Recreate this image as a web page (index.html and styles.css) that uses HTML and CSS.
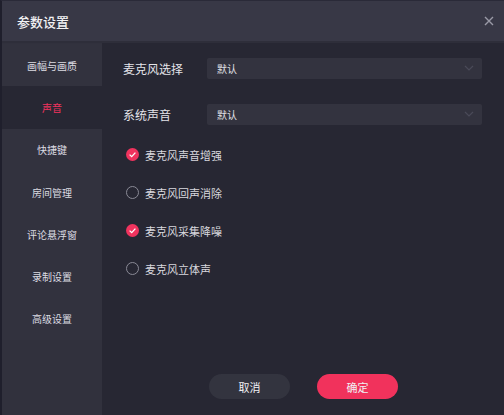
FILE: index.html
```html
<!DOCTYPE html>
<html lang="zh-CN">
<head>
<meta charset="utf-8">
<link rel="stylesheet" href="styles.css">
</head>
<body>
<div class="dialog">
  <div class="header">
    <span class="title">参数设置</span>
    <svg class="close" width="10" height="10" viewBox="0 0 10 10"><path d="M1 1L9 9M9 1L1 9" stroke="#9a9aa6" stroke-width="1.4" fill="none"/></svg>
  </div>
  <div class="body">
    <nav class="side">
      <div class="item">画幅与画质</div>
      <div class="item active">声音</div>
      <div class="item">快捷键</div>
      <div class="item">房间管理</div>
      <div class="item">评论悬浮窗</div>
      <div class="item">录制设置</div>
      <div class="item">高级设置</div>
    </nav>
    <main class="main">
      <div class="field">
        <span class="label">麦克风选择</span>
        <div class="select"><span>默认</span><svg class="chev" width="10" height="6" viewBox="0 0 10 6"><path d="M1 1L5 5L9 1" stroke="#4a4a58" stroke-width="1.2" fill="none"/></svg></div>
      </div>
      <div class="field">
        <span class="label">系统声音</span>
        <div class="select"><span>默认</span><svg class="chev" width="10" height="6" viewBox="0 0 10 6"><path d="M1 1L5 5L9 1" stroke="#4a4a58" stroke-width="1.2" fill="none"/></svg></div>
      </div>
      <div class="checks">
        <div class="check on"><span class="box"><svg width="13" height="13" viewBox="0 0 13 13"><path d="M3.6 6.6L5.7 8.6L9.4 4.6" stroke="#fff" stroke-width="1.3" fill="none"/></svg></span>麦克风声音增强</div>
        <div class="check"><span class="box"></span>麦克风回声消除</div>
        <div class="check on"><span class="box"><svg width="13" height="13" viewBox="0 0 13 13"><path d="M3.6 6.6L5.7 8.6L9.4 4.6" stroke="#fff" stroke-width="1.3" fill="none"/></svg></span>麦克风采集降噪</div>
        <div class="check"><span class="box"></span>麦克风立体声</div>
      </div>
      <div class="actions">
        <button class="btn cancel">取消</button>
        <button class="btn ok">确定</button>
      </div>
    </main>
  </div>
</div>
</body>
</html>
```
FILE: styles.css
```css
* { box-sizing: border-box; }
html, body { margin: 0; padding: 0; }
body {
  width: 504px;
  height: 415px;
  background: #272733;
  font-family: "Noto Sans CJK SC", "Noto Sans", sans-serif;
  overflow: hidden;
}
.dialog {
  width: 504px;
  height: 415px;
  display: flex;
  flex-direction: column;
  border-left: 2px solid #1f1f2c;
  border-top: 1px solid #2a2a38;
}
.header {
  height: 42px;
  flex: none;
  background: #383846;
  display: flex;
  align-items: center;
  justify-content: space-between;
  padding: 0 10px 0 15px;
  border-bottom: 2px solid #2e2e3a;
}
.title {
  color: #f2f2f4;
  font-size: 13px;
  font-weight: 500;
}
.close { display: block; }
.body {
  flex: 1;
  display: flex;
}
.side {
  width: 100px;
  flex: none;
  background: #31313d;
  display: flex;
  flex-direction: column;
  padding-top: 1px;
}
.item {
  height: 42.3px;
  display: flex;
  align-items: center;
  justify-content: center;
  color: #dcdce2;
  font-size: 10px;
  background: #32323e;
}
.item.active {
  background: #272733;
  color: #f0335e;
}
.main {
  flex: 1;
  background: #272733;
  padding: 14px 22px 0 21px;
  display: flex;
  flex-direction: column;
}
.field {
  display: flex;
  align-items: center;
  height: 22px;
  margin-bottom: 24px;
}
.label {
  width: 84px;
  color: #e4e4ea;
  font-size: 12px;
}
.select {
  flex: 1;
  height: 21px;
  background: #33333f;
  border-radius: 2px;
  display: flex;
  align-items: center;
  justify-content: space-between;
  padding: 0 8px 0 10px;
  color: #e0e0e6;
  font-size: 10px;
}
.checks {
  display: flex;
  flex-direction: column;
  gap: 21px;
  margin-top: -3px;
  padding-left: 3px;
}
.check {
  display: flex;
  align-items: center;
  height: 17px;
  color: #d8d8de;
  font-size: 11px;
}
.box {
  width: 13px;
  height: 13px;
  border-radius: 50%;
  border: 1px solid #8a8a96;
  margin-right: 6px;
  display: flex;
}
.check.on .box {
  border: none;
  background: #f0335e;
}
.actions {
  display: flex;
  gap: 27px;
  margin-top: auto;
  margin-bottom: 16px;
  padding-left: 86px;
}
.btn {
  width: 81px;
  height: 25px;
  border: none;
  border-radius: 13px;
  font-family: inherit;
  font-size: 11px;
  color: #f0f0f4;
  padding: 0;
}
.cancel { background: #33343f; }
.ok { background: #f1325c; }
```
